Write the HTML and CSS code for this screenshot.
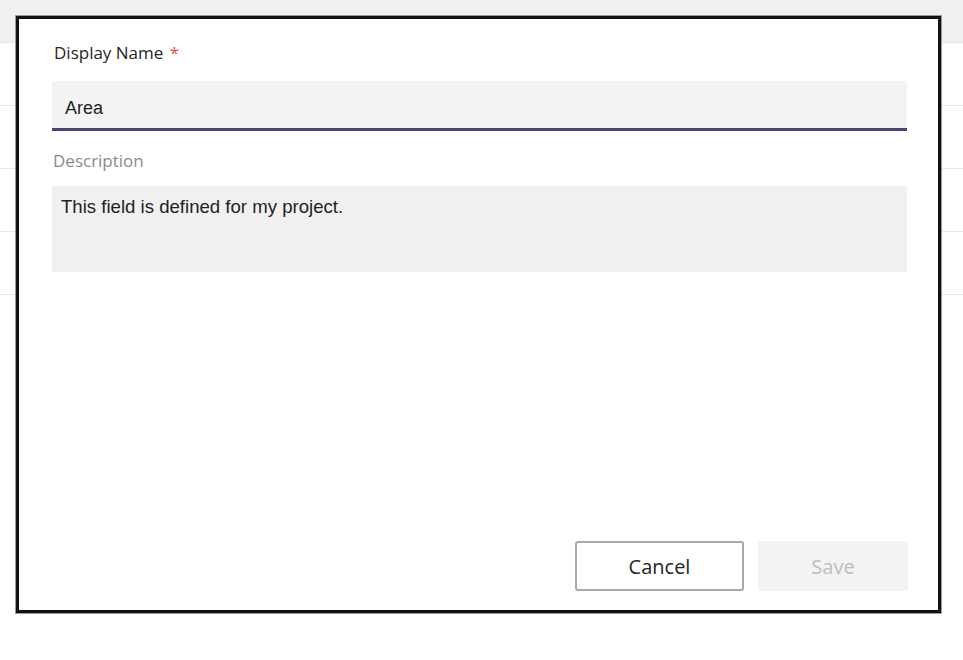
FILE: index.html
```html
<!DOCTYPE html>
<html>
<head>
<meta charset="utf-8">
<link rel="stylesheet" href="styles.css">
</head>
<body>
<div class="backdrop">
  <div class="topbar"></div>
  <div class="row"></div>
  <div class="row"></div>
  <div class="row"></div>
  <div class="row"></div>
</div>
<div class="dialog">
  <div class="field">
    <label class="label">Display Name <span class="req">*</span></label>
    <div class="input">Area</div>
  </div>
  <div class="field">
    <label class="label muted">Description</label>
    <div class="textarea">This field is defined for my project.</div>
  </div>
  <div class="actions">
    <button class="btn cancel">Cancel</button>
    <button class="btn save">Save</button>
  </div>
</div>
</body>
</html>
```
FILE: styles.css
```css
html, body {
  margin: 0;
  padding: 0;
  background: #ffffff;
  width: 963px;
  height: 660px;
  overflow: hidden;
}
.backdrop {
  display: flex;
  flex-direction: column;
}
.topbar {
  height: 42px;
  background: #f0f0f0;
  border-bottom: 1px solid #e4e4e4;
}
.row {
  height: 62px;
  border-bottom: 1px solid #e8e8e8;
}
.dialog {
  position: absolute;
  left: 16px;
  top: 16px;
  width: 919px;
  height: 591px;
  border: 3px solid #111111;
  box-shadow: 0 0 0 1px #9a9a9a;
  background: #ffffff;
  box-sizing: content-box;
  display: flex;
  flex-direction: column;
  padding: 0;
}
.field {
  display: flex;
  flex-direction: column;
  margin: 0 31px 0 33px;
}
.field:first-child {
  margin-top: 23px;
}
.label {
  font-family: "Open Sans", "Noto Sans", sans-serif;
  font-size: 17px;
  line-height: 22px;
  color: #252525;
  margin-bottom: 17px;
  padding-left: 2px;
}
.label.muted {
  color: #8a8a8a;
  margin-bottom: 14px;
  padding-left: 1px;
}
.req {
  color: #e74c4c;
  margin-left: 2px;
}
.input {
  height: 32px;
  padding: 15px 0 0 13px;
  background: #f3f3f3;
  border-bottom: 3px solid #464775;
  box-sizing: content-box;
  font-family: "Liberation Sans", Arial, sans-serif;
  font-size: 18px;
  line-height: 24px;
  color: #222222;
  margin-bottom: 19px;
}
.textarea {
  height: 86px;
  box-sizing: border-box;
  background: #f0f0f0;
  font-family: "Liberation Sans", Arial, sans-serif;
  font-size: 18.6px;
  line-height: 20px;
  color: #222222;
  padding: 11px 9px;
}
.actions {
  margin-top: auto;
  margin-bottom: 19px;
  margin-right: 30px;
  display: flex;
  justify-content: flex-end;
  gap: 14px;
}
.btn {
  font-family: "Open Sans", "Noto Sans", sans-serif;
  font-size: 20px;
  height: 50px;
  border-radius: 3px;
  box-sizing: border-box;
  cursor: default;
}
.cancel {
  width: 169px;
  background: #ffffff;
  border: 2px solid #a8a8a8;
  color: #252525;
}
.save {
  width: 150px;
  background: #f3f3f3;
  border: none;
  color: #bdbdbd;
}
```
